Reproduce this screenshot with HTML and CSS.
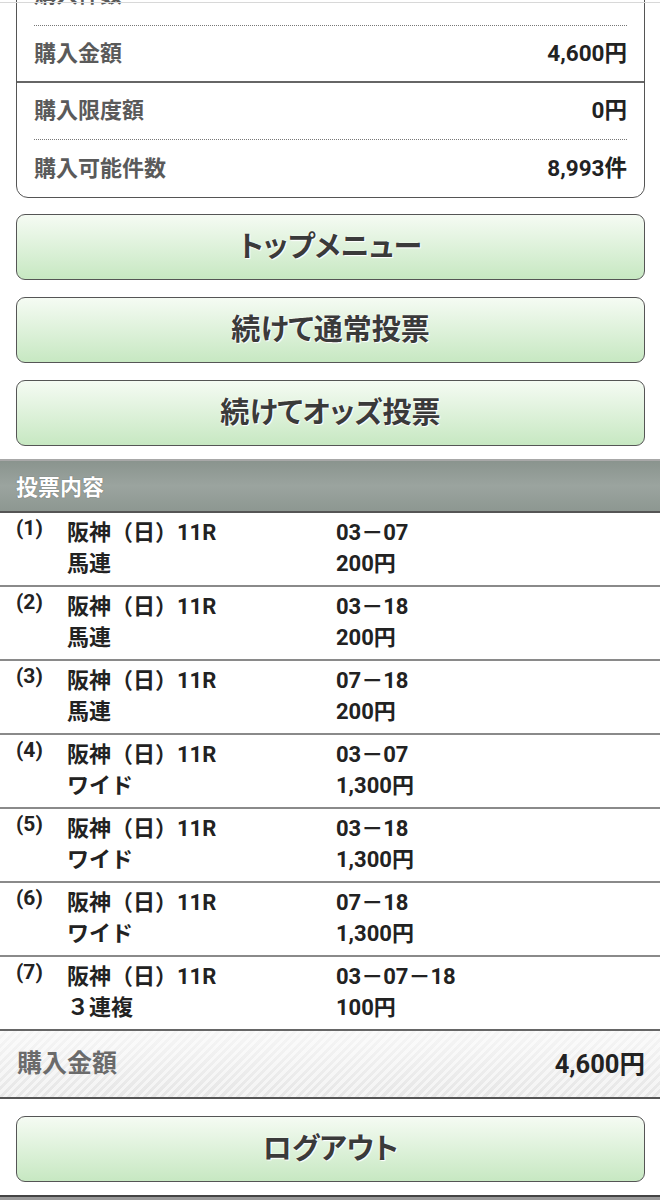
FILE: index.html
```html
<!DOCTYPE html>
<html lang="ja">
<head>
<meta charset="utf-8">
<title>投票完了</title>
<link rel="stylesheet" href="styles.css">
</head>
<body>
<div class="topline"></div>
<div class="card">
  <div class="group">
    <div class="row dotted first"><span class="lbl">購入件数</span><span class="val"></span></div>
    <div class="row short"><span class="lbl">購入金額</span><span class="val">4,600円</span></div>
  </div>
  <div class="group">
    <div class="row dotted"><span class="lbl">購入限度額</span><span class="val">0円</span></div>
    <div class="row"><span class="lbl">購入可能件数</span><span class="val">8,993件</span></div>
  </div>
</div>

<div class="btns">
  <a class="btn">トップメニュー</a>
  <a class="btn">続けて通常投票</a>
  <a class="btn">続けてオッズ投票</a>
</div>

<div class="sec-head">投票内容</div>
<ul class="bets">
  <li class="bet"><span class="no">(1)</span><span>阪神（日）11R</span><span>03－07</span><span></span><span>馬連</span><span>200円</span></li>
  <li class="bet"><span class="no">(2)</span><span>阪神（日）11R</span><span>03－18</span><span></span><span>馬連</span><span>200円</span></li>
  <li class="bet"><span class="no">(3)</span><span>阪神（日）11R</span><span>07－18</span><span></span><span>馬連</span><span>200円</span></li>
  <li class="bet"><span class="no">(4)</span><span>阪神（日）11R</span><span>03－07</span><span></span><span>ワイド</span><span>1,300円</span></li>
  <li class="bet"><span class="no">(5)</span><span>阪神（日）11R</span><span>03－18</span><span></span><span>ワイド</span><span>1,300円</span></li>
  <li class="bet"><span class="no">(6)</span><span>阪神（日）11R</span><span>07－18</span><span></span><span>ワイド</span><span>1,300円</span></li>
  <li class="bet"><span class="no">(7)</span><span>阪神（日）11R</span><span>03－07－18</span><span></span><span>３連複</span><span>100円</span></li>
</ul>

<div class="total"><span class="tlbl">購入金額</span><span class="tval">4,600円</span></div>

<div class="btns logout">
  <a class="btn">ログアウト</a>
</div>

<div class="footer"></div>
</body>
</html>
```

FILE: styles.css
```css
html, body {
  margin: 0;
  padding: 0;
  background: #fff;
}
body {
  font-family: Roboto, "Noto Sans CJK JP", sans-serif;
  font-weight: 700;
  color: #222;
  overflow: hidden;
  position: relative;
}
.topline {
  position: absolute;
  left: 0;
  right: 0;
  top: 2px;
  height: 1px;
  background: #d8d8d8;
  z-index: 2;
}

/* summary card */
.card {
  margin: -32px 15px 0 16px;
  border: 1px solid #555;
  border-radius: 12px;
  background: #fff;
}
.group + .group {
  border-top: 2px solid #666;
}
.row {
  box-sizing: border-box;
  height: 57px;
  padding-bottom: 6px;
  margin: 0 17px;
  display: flex;
  align-items: center;
  justify-content: space-between;
  font-size: 22px;
}
.row.first {
  padding-bottom: 10px;
}
.row.short {
  height: 55px;
}
.row.dotted {
  border-bottom: 1px dotted #777;
}
.lbl {
  color: #5a5a5a;
}
.val {
  color: #222;
  font-size: 22.5px;
}

/* buttons */
.btns {
  margin: 16px 15px 0 16px;
  display: flex;
  flex-direction: column;
  gap: 17px;
}
.btn {
  box-sizing: border-box;
  display: flex;
  align-items: center;
  justify-content: center;
  height: 66px;
  padding-bottom: 6px;
  border: 1px solid #555;
  border-radius: 9px;
  background: linear-gradient(#f5fbf3, #c7e8c2);
  color: #3a3a3a;
  font-size: 29px;
  font-feature-settings: "palt";
  text-shadow: 0 0 2px #fff, 1px 1px 1px #fff;
}

/* section header */
.sec-head {
  margin-top: 13px;
  border-top: 2px solid #a8a8a8;
  border-bottom: 2px solid #555;
  box-sizing: border-box;
  height: 54px;
  padding: 0 0 3px 16px;
  display: flex;
  align-items: center;
  background: linear-gradient(#8a948e, #9ba49f 50%, #8d9791);
  color: #fff;
  font-size: 22px;
  text-shadow: 0 0 1px #555;
}

/* bets */
.bets {
  list-style: none;
  margin: 0;
  padding: 0;
}
.bet {
  display: grid;
  grid-template-columns: 51px 269px 1fr;
  grid-auto-rows: 31px;
  align-items: center;
  padding: 1px 0 9px 16px;
  border-bottom: 2px solid #8a8a8a;
  font-size: 22px;
  color: #222;
}
.bet:last-child {
  border-bottom: none;
}
.no {
  font-size: 21px;
  align-self: start;
  line-height: 28px;
}

/* total */
.total {
  box-sizing: border-box;
  height: 70px;
  padding: 0 15px 6px 17px;
  border-top: 2px solid #666;
  border-bottom: 2px solid #555;
  display: flex;
  align-items: center;
  justify-content: space-between;
  background:
    repeating-linear-gradient(-45deg, rgba(255,255,255,0.55) 0 3px, rgba(255,255,255,0) 3px 6px),
    linear-gradient(#f6f6f6, #e6e6e6);
}
.tlbl {
  color: #6b6b6b;
  font-size: 25px;
}
.tval {
  color: #222;
  font-size: 25.5px;
}

.logout {
  margin-top: 17px;
}

.footer {
  margin-top: 13px;
  border-top: 2px solid #444;
  height: 40px;
  background: #9a9a9a;
}
```
